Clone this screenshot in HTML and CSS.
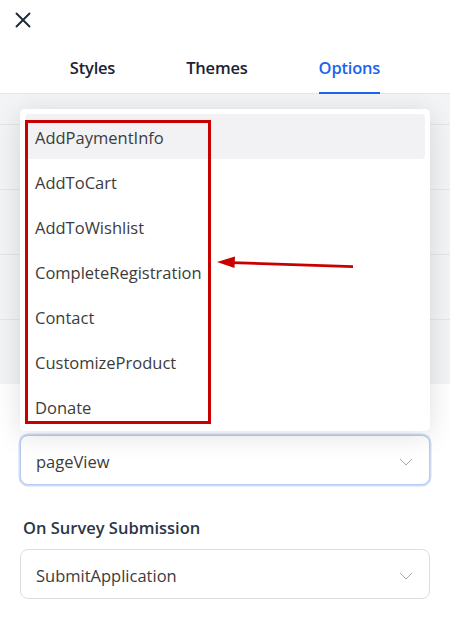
FILE: index.html
```html
<!DOCTYPE html>
<html lang="en">
<head>
    <meta charset="UTF-8">
    <meta name="viewport" content="width=device-width, initial-scale=1.0">
    <title>Survey tracking options</title>
    <link rel="stylesheet" href="styles.css">
</head>
<body>
    <div class="panel">
        <!-- Barre du haut : bouton fermer -->
        <div class="top-bar">
            <button class="close-btn" aria-label="Close">
                <svg width="16" height="16" viewBox="0 0 16 16">
                    <path d="M1.5 1.5 L14.5 14.5 M14.5 1.5 L1.5 14.5" stroke="#1f2937" stroke-width="1.9" stroke-linecap="round" fill="none"/>
                </svg>
            </button>
        </div>

        <!-- Onglets -->
        <div class="tabs">
            <div class="tab">Styles</div>
            <div class="tab">Themes</div>
            <div class="tab active">Options</div>
        </div>

        <!-- Lignes de réglages derrière le menu -->
        <div class="settings-rows">
            <div class="row"></div>
            <div class="row"></div>
            <div class="row"></div>
            <div class="row"></div>
        </div>

        <div class="fields">
            <div class="field first">
                <div class="select-wrap">
                    <div class="select focused">
                        <span>pageView</span>
                        <svg class="chevron" width="14" height="8" viewBox="0 0 14 8">
                            <path d="M1 1 L7 7 L13 1" stroke="#a8a8ad" stroke-width="1" fill="none"/>
                        </svg>
                    </div>

                    <!-- Menu déroulant ouvert vers le haut -->
                    <ul class="dropdown">
                        <li class="option hovered">AddPaymentInfo</li>
                        <li class="option">AddToCart</li>
                        <li class="option">AddToWishlist</li>
                        <li class="option">CompleteRegistration</li>
                        <li class="option">Contact</li>
                        <li class="option">CustomizeProduct</li>
                        <li class="option">Donate</li>
                    </ul>
                </div>
            </div>

            <div class="field">
                <div class="field-label">On Survey Submission</div>
                <div class="select">
                    <span>SubmitApplication</span>
                    <svg class="chevron" width="14" height="8" viewBox="0 0 14 8">
                        <path d="M1 1 L7 7 L13 1" stroke="#a8a8ad" stroke-width="1" fill="none"/>
                    </svg>
                </div>
            </div>
        </div>

        <!-- Annotation : cadre rouge et flèche -->
        <svg class="annotation" width="450" height="632" viewBox="0 0 450 632">
            <rect x="26.5" y="121.5" width="183" height="301" fill="none" stroke="#c80000" stroke-width="3"/>
            <line x1="232" y1="262.6" x2="353" y2="266.6" stroke="#c80000" stroke-width="2.6"/>
            <polygon points="217,262 235,256.5 234.5,268" fill="#c80000"/>
        </svg>
    </div>
</body>
</html>
```

FILE: styles.css
```css
body {
    margin: 0;
    background: #ffffff;
    font-family: "Open Sans", "Noto Sans", sans-serif;
    color: #333333;
}

.panel {
    position: relative;
    width: 450px;
    height: 632px;
    overflow: hidden;
}

.top-bar {
    height: 40px;
    padding: 11px 0 0 14px;
    box-sizing: border-box;
}

.close-btn {
    border: none;
    background: none;
    padding: 0;
    width: 17px;
    height: 17px;
    cursor: pointer;
}

.tabs {
    display: flex;
    justify-content: center;
    gap: 71px;
    height: 54px;
    box-sizing: border-box;
    border-bottom: 1px solid #e6e7eb;
}

.tab {
    display: flex;
    align-items: center;
    font-size: 16.5px;
    font-weight: 600;
    color: #1a2233;
    padding-top: 2px;
    margin-bottom: -1px;
    border-bottom: 2px solid transparent;
    letter-spacing: -0.2px;
}

    .tab.active {
        color: #1d63ed;
        border-bottom-color: #1d63ed;
    }

.settings-rows {
    background: #f3f4f6;
    padding-top: 30px;
}

.row {
    height: 64px;
    border-top: 1px solid #e4e6ea;
}

.fields {
    padding: 0 20px;
    display: flex;
    flex-direction: column;
    gap: 32px;
}

.field {
    display: flex;
    flex-direction: column;
    gap: 10px;
}

    .field.first {
        margin-top: 51px;
    }

.field-label {
    font-size: 16.5px;
    font-weight: 600;
    line-height: 22px;
    color: #2c3645;
    padding-left: 3px;
}

.select-wrap {
    position: relative;
}

.select {
    display: flex;
    align-items: center;
    justify-content: space-between;
    height: 50px;
    padding: 2px 16px 0 15px;
    border: 1px solid #dedee2;
    border-radius: 8px;
    font-size: 16.5px;
    color: #3c3c3c;
    box-sizing: border-box;
    background: #ffffff;
}

    .select.focused {
        border-color: #b7cbf2;
        box-shadow: 0 0 0 1.5px #cfdcf6;
    }

.chevron {
    margin-top: 1px;
}

.dropdown {
    position: absolute;
    left: 0;
    right: 0;
    bottom: calc(100% + 4px);
    margin: 0;
    padding: 5px 5px 2px;
    list-style: none;
    background: #ffffff;
    border-radius: 5px;
    box-shadow: 0 4px 28px rgba(0, 0, 0, 0.13);
}

.option {
    height: 45px;
    line-height: 47px;
    padding-left: 10px;
    font-size: 16.5px;
    color: #3c3c3c;
    border-radius: 4px;
}

    .option.hovered {
        background: #f2f2f4;
    }

.annotation {
    position: absolute;
    left: 0;
    top: 0;
    pointer-events: none;
}
```
